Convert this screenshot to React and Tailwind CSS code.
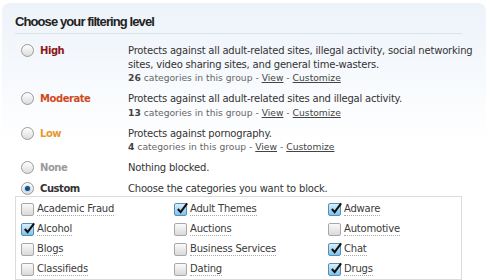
import React from "react";

// Filtering level options shown as radio rows.
const levels = [
  {
    name: "High",
    color: "text-[#8e1616]",
    lines: [
      "Protects against all adult-related sites, illegal activity, social networking",
      "sites, video sharing sites, and general time-wasters.",
    ],
    count: 26,
  },
  {
    name: "Moderate",
    color: "text-[#cf4a1c]",
    lines: ["Protects against all adult-related sites and illegal activity."],
    count: 13,
  },
  {
    name: "Low",
    color: "text-[#e79a2c]",
    lines: ["Protects against pornography."],
    count: 4,
  },
  { name: "None", color: "text-[#9a9a9a]", lines: ["Nothing blocked."] },
  {
    name: "Custom",
    color: "text-[#333]",
    lines: ["Choose the categories you want to block."],
    selected: true,
  },
];

const categories = [
  ["Academic Fraud", false],
  ["Adult Themes", true],
  ["Adware", true],
  ["Alcohol", true],
  ["Auctions", false],
  ["Automotive", false],
  ["Blogs", false],
  ["Business Services", false],
  ["Chat", true],
  ["Classifieds", false],
  ["Dating", false],
  ["Drugs", true],
];

const Radio = ({ selected }) => (
  <span className="w-[13px] h-[13px] rounded-full border border-[#9a9a9a] bg-gradient-to-b from-white to-[#dcdcdc] flex items-center justify-center shrink-0">
    {selected && (
      <span className="w-[5px] h-[5px] rounded-full bg-[#1a4f86] shadow-[0_0_2px_#4aa3e6]"></span>
    )}
  </span>
);

const Checkbox = ({ checked }) =>
  checked ? (
    <span className="relative w-[13px] h-[13px] rounded-[2px] border border-[#5a8db6] bg-gradient-to-b from-[#d7effc] to-[#7cc3ec] shrink-0">
      <svg viewBox="0 0 14 14" className="absolute left-[1px] -top-[2px] w-[13px] h-[13px]">
        <path d="M2 7.5 L5 11 L12 1.5" fill="none" stroke="#111" strokeWidth="2.2" />
      </svg>
    </span>
  ) : (
    <span className="w-[13px] h-[13px] rounded-[2px] border border-[#a8a8a8] bg-gradient-to-b from-[#fafafa] to-[#d9d9d9] shrink-0"></span>
  );

export default function App() {
  return (
    <div className="w-[490px] h-[280px] overflow-hidden bg-white font-['DejaVu_Sans',sans-serif] text-[#333]">
      <div className="ml-[2px] mr-[4px] mt-[3px] h-[277px] rounded-t-[8px] bg-gradient-to-b from-[#edf3fa] via-white to-white px-[13px]">
        {/* Title */}
        <h1 className="pt-[11px] pb-[3px] border-b border-[#dde3ea] mr-[11px] font-['Liberation_Sans',sans-serif] font-bold text-[13px] leading-[16px] tracking-[-0.9px] text-[#222]">
          Choose your filtering level
        </h1>

        {/* Levels */}
        <div className="mt-[10px] flex flex-col gap-[7px] tracking-[-0.2px]">
          {levels.map((l) => (
            <div key={l.name} className="flex">
              <div className="pl-[6px] w-[113px] flex items-start gap-[6px] shrink-0">
                <span className="h-[13.5px] flex items-center">
                  <Radio selected={l.selected} />
                </span>
                <span className={`text-[10px] leading-[13.5px] font-bold tracking-[-0.45px] ${l.color}`}>{l.name}</span>
              </div>
              <div className="text-[10px] leading-[13.5px] text-[#333]">
                {l.lines.map((t) => (
                  <div key={t}>{t}</div>
                ))}
                {l.count !== undefined && (
                  <div className="text-[9.2px] leading-[14px] tracking-normal text-[#666]">
                    <b className="text-[#444]">{l.count}</b> categories in this group -{" "}
                    <span className="underline text-[#444]">View</span> -{" "}
                    <span className="underline text-[#444]">Customize</span>
                  </div>
                )}
              </div>
            </div>
          ))}
        </div>

        {/* Categories */}
        <div className="mt-[1px] mr-[11px] border border-[#dcdcdc] bg-white pt-[2px] pl-[5px] grid grid-cols-[153px_154px_1fr] tracking-[-0.2px]">
          {categories.map(([name, checked]) => (
            <div key={name} className="h-[20px] flex items-center gap-[3px]">
              <Checkbox checked={checked} />
              <span className="text-[10px] leading-[13px] text-[#3a3a3a] border-b border-dotted border-[#aaa]">{name}</span>
            </div>
          ))}
        </div>
      </div>
    </div>
  );
}
